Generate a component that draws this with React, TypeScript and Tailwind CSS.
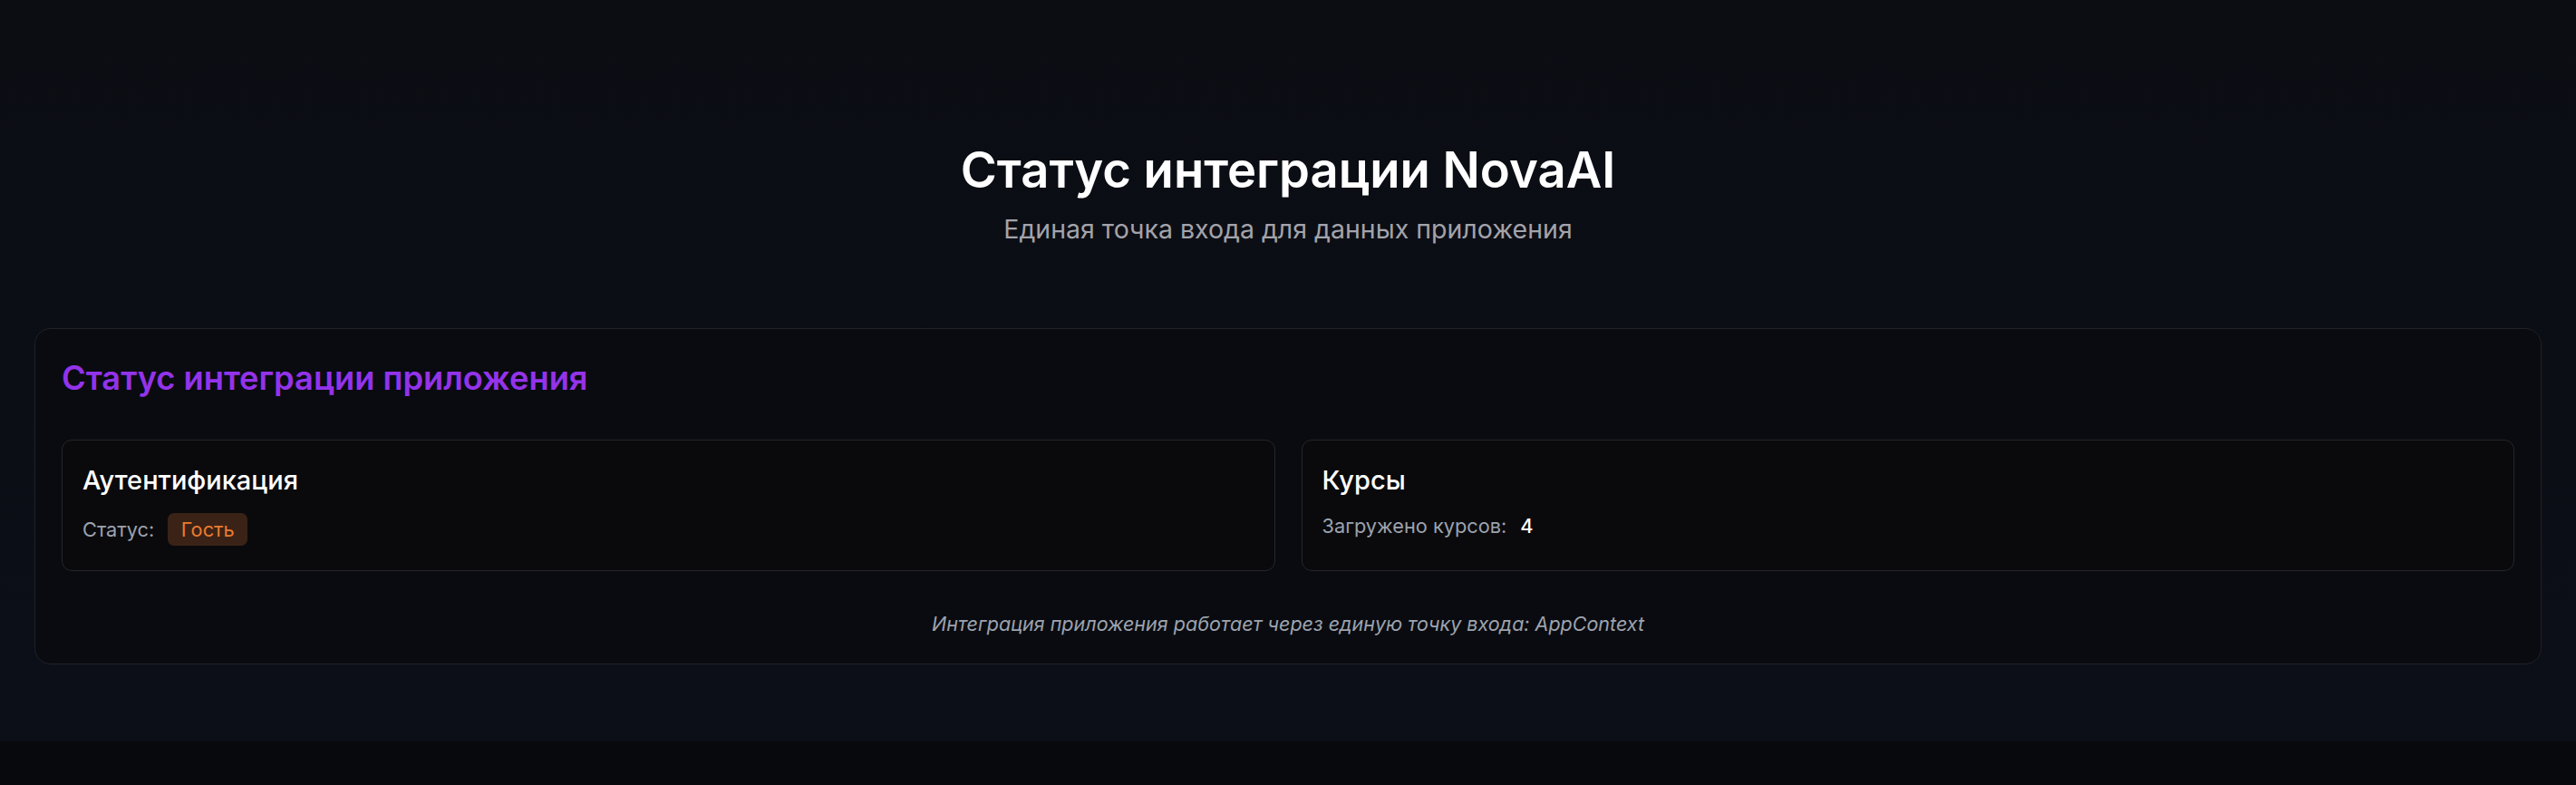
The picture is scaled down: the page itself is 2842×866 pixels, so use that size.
import React from "react";

export default function App() {
  return (
    <div className="flex min-h-screen w-full flex-col bg-[#08090c] font-['Inter','Noto_Sans',sans-serif] antialiased">
      <main className="w-full bg-gradient-to-b from-[#0b0d13] to-[#0c0f18] px-[38px] pt-[155px] pb-[85px]">
        <header className="mb-[88px] flex flex-col items-center">
          <h1 className="mb-[11px] text-[54.4px] font-semibold leading-[65.25px] text-white">
            Статус интеграции NovaAI
          </h1>
          <p className="text-[28.5px] leading-[43px] text-[#a3a3ab]">
            Единая точка входа для данных приложения
          </p>
        </header>

        <section className="rounded-[18px] border border-[#202228] bg-[#0a0b10] p-[29px]">
          <h2 className="mb-[42px] text-[36.25px] font-semibold leading-[50.75px] text-[#9333ea]">
            Статус интеграции приложения
          </h2>

          <div className="grid grid-cols-2 gap-[29px]">
            <div className="rounded-[11px] border border-[#25262b] bg-[#0a0a0c] px-[22px] pt-[22px] pb-[27px]">
              <h3 className="mb-[14.5px] text-[29px] font-medium leading-[43.5px] text-white">
                Аутентификация
              </h3>
              <div className="flex items-center gap-[15px]">
                <span className="text-[21.75px] leading-[29px] text-[#9ca3af]">Статус:</span>
                <span className="rounded-[7px] bg-[#3a2316] px-[14.5px] py-[3.6px] text-[21.75px] leading-[29px] text-[#ec7b30]">
                  Гость
                </span>
              </div>
            </div>

            <div className="rounded-[11px] border border-[#25262b] bg-[#0a0a0c] px-[22px] pt-[22px] pb-[27px]">
              <h3 className="mb-[14.5px] text-[29px] font-medium leading-[43.5px] text-white">
                Курсы
              </h3>
              <div className="flex items-center gap-[15px]">
                <span className="text-[21.75px] leading-[29px] text-[#9ca3af]">Загружено курсов:</span>
                <span className="text-[21.75px] font-medium leading-[29px] text-white">4</span>
              </div>
            </div>
          </div>

          <p className="mt-[43.5px] text-center text-[21.5px] italic leading-[29px] text-[#9ca3af]">
            Интеграция приложения работает через единую точку входа: AppContext
          </p>
        </section>
      </main>
      <footer className="h-[49px] w-full flex-1 bg-[#08090c]" />
    </div>
  );
}
